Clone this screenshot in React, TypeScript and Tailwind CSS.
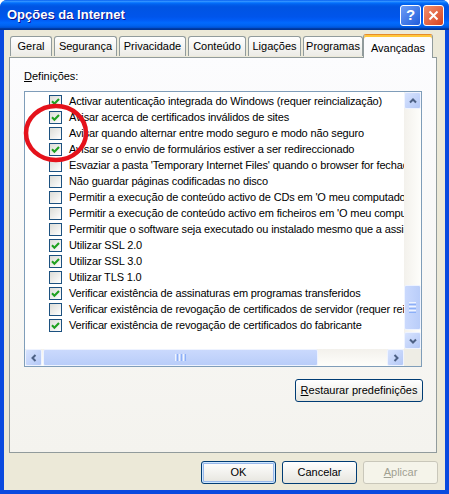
import React from "react";

const rows: [boolean, string][] = [
  [true, "Activar autenticação integrada do Windows (requer reincialização)"],
  [true, "Avisar acerca de certificados inválidos de sites"],
  [false, "Avisar quando alternar entre modo seguro e modo não seguro"],
  [true, "Avisar se o envio de formulários estiver a ser redireccionado"],
  [false, "Esvaziar a pasta 'Temporary Internet Files' quando o browser for fechado"],
  [false, "Não guardar páginas codificadas no disco"],
  [false, "Permitir a execução de conteúdo activo de CDs em 'O meu computador'"],
  [false, "Permitir a execução de conteúdo activo em ficheiros em 'O meu computador'"],
  [false, "Permitir que o software seja executado ou instalado mesmo que a assinatura seja inválida"],
  [true, "Utilizar SSL 2.0"],
  [true, "Utilizar SSL 3.0"],
  [false, "Utilizar TLS 1.0"],
  [true, "Verificar existência de assinaturas em programas transferidos"],
  [false, "Verificar existência de revogação de certificados de servidor (requer reinicialização)"],
  [true, "Verificar existência de revogação de certificados do fabricante"],
];

const tabs = [
  { label: "Geral", cls: "w-[42px]" },
  { label: "Segurança", cls: "w-[63px] ml-[2px]" },
  { label: "Privacidade", cls: "w-[67px] ml-[2px]" },
  { label: "Conteúdo", cls: "w-[58px] ml-[2px]" },
  { label: "Ligações", cls: "w-[53px] ml-[2px]" },
  { label: "Programas", cls: "w-[60px] ml-[2px]" },
];

const Check = ({ on }: { on: boolean }) => (
  <span className="w-[13px] h-[13px] shrink-0 border border-[#1C5180] bg-linear-to-br from-[#DCDCD7] to-white flex items-center justify-center">
    {on && (
      <svg width="11" height="11" viewBox="0 0 11 11">
        <path d="M2 5.3 L4.4 7.7 L9 3" stroke="#21A121" strokeWidth="2.1" fill="none" />
      </svg>
    )}
  </span>
);

const ScrollBtn = ({ d }: { d: string }) => (
  <span className="w-[17px] h-[17px] shrink-0 rounded-[2px] border border-[#EEF3FF] bg-linear-to-br from-[#D7E3FE] to-[#B4C8F6] flex items-center justify-center">
    <svg width="8" height="8" viewBox="0 0 8 8">
      <path d={d} stroke="#4D6185" strokeWidth="2" fill="none" />
    </svg>
  </span>
);

const XpButton = ({ children, cls }: { children: React.ReactNode; cls: string }) => (
  <button className={"h-[23px] rounded-[3px] border border-[#003C74] bg-linear-to-b from-white to-[#E6E5DE] text-[11px] text-black flex items-center justify-center " + cls}>
    {children}
  </button>
);

export default function App() {
  return (
    <div className="w-[449px] h-[494px] bg-white relative font-['Liberation_Sans',Arial,sans-serif] text-[11px] text-black">
      <div className="w-full h-full flex flex-col rounded-t-[7px] overflow-hidden bg-[#0A4ADF]">
        {/* title bar */}
        <div className="h-[30px] shrink-0 flex items-center pl-[7px] pr-[5px] bg-[linear-gradient(to_bottom,#0058ee_0%,#3593ff_4%,#288eff_6%,#127dff_8%,#036ffc_10%,#0262ee_14%,#0057e5_20%,#0054e3_24%,#0055eb_56%,#005bf5_66%,#026afe_76%,#0062ef_86%,#0052d6_92%,#0040ab_94%,#003092_100%)]">
          <span className="flex-1 text-white font-bold text-[13px] [text-shadow:1px_1px_#0F1089]">Opções da Internet</span>
          <span className="w-[21px] h-[21px] rounded-[3px] border border-white bg-linear-to-br from-[#6E9DF5] to-[#1F5BDB] text-white font-bold text-[15px] flex items-center justify-center">?</span>
          <span className="w-[21px] h-[21px] ml-[2px] rounded-[3px] border border-white bg-linear-to-br from-[#F08E6C] to-[#D6401C] flex items-center justify-center">
            <svg width="11" height="11" viewBox="0 0 11 11">
              <path d="M1.5 1.5 L9.5 9.5 M9.5 1.5 L1.5 9.5" stroke="white" strokeWidth="2" />
            </svg>
          </span>
        </div>

        {/* body */}
        <div className="flex-1 px-[4px] pb-[4px]">
          <div className="h-full bg-[#ECE9D8] flex flex-col pt-[4px] pl-[5px] pr-[8px]">
            {/* tabs */}
            <div className="h-[23px] flex items-end pl-[1px] relative z-10">
              {tabs.map((t) => (
                <div
                  key={t.label}
                  className={"h-[20px] mb-px border border-b-0 border-[#919B9C] rounded-t-[3px] bg-linear-to-b from-white to-[#ECEBE6] flex items-center justify-center " + t.cls}
                >
                  {t.label}
                </div>
              ))}
              <div className="w-[70px] h-[24px] -mb-px rounded-t-[3px] border-x border-t border-[#919B9C] border-t-[#E68B2C] shadow-[inset_0_2px_0_#FFC73C] bg-[#FCFCFE] flex items-start justify-center pt-[5px]">
                Avançadas
              </div>
            </div>

            {/* panel */}
            <div className="h-[396px] border border-[#919B9C] bg-linear-to-b from-[#FCFCFE] to-[#F4F3EE] flex flex-col pl-[14px] pr-[13px] pt-[12px]">
              <div className="h-[13px] leading-[13px]">
                <span className="underline">D</span>efinições:
              </div>
              <div className="mt-[8px] w-[398px] h-[276px] border border-[#7F9DB9] bg-white grid grid-cols-[379px_17px] grid-rows-[257px_17px]">
                <div className="overflow-hidden pt-[1px] tracking-[-0.15px]">
                  {rows.map(([on, text], i) => (
                    <div key={i} className="h-[16px] flex items-center pl-[24px] gap-[7px] whitespace-nowrap">
                      <Check on={on} />
                      <span>{text}</span>
                    </div>
                  ))}
                </div>
                {/* vertical scrollbar */}
                <div className="flex flex-col bg-linear-to-r from-[#F3F1EC] to-[#FEFEFB]">
                  <ScrollBtn d="M1 5.5 L4 2.5 L7 5.5" />
                  <div className="flex-1 flex flex-col">
                    <div className="mt-[176px] h-[45px] rounded-[2px] border border-[#EEF3FF] bg-linear-to-r from-[#CAD9FD] to-[#B9CDF9] flex flex-col items-center justify-center gap-[1px]">
                      <span className="w-[7px] h-px bg-[#EEF4FE]" />
                      <span className="w-[7px] h-px bg-[#8CB0F8]" />
                      <span className="w-[7px] h-px bg-[#EEF4FE]" />
                      <span className="w-[7px] h-px bg-[#8CB0F8]" />
                      <span className="w-[7px] h-px bg-[#EEF4FE]" />
                      <span className="w-[7px] h-px bg-[#8CB0F8]" />
                    </div>
                  </div>
                  <ScrollBtn d="M1 2.5 L4 5.5 L7 2.5" />
                </div>
                {/* horizontal scrollbar */}
                <div className="flex bg-linear-to-b from-[#F3F1EC] to-[#FEFEFB]">
                  <ScrollBtn d="M5.5 1 L2.5 4 L5.5 7" />
                  <div className="flex-1 flex">
                    <div className="ml-[1px] w-[275px] h-[17px] rounded-[2px] border border-[#EEF3FF] bg-linear-to-b from-[#CAD9FD] to-[#B9CDF9] flex items-center justify-center gap-[1px]">
                      <span className="w-px h-[7px] bg-[#EEF4FE]" />
                      <span className="w-px h-[7px] bg-[#8CB0F8]" />
                      <span className="w-px h-[7px] bg-[#EEF4FE]" />
                      <span className="w-px h-[7px] bg-[#8CB0F8]" />
                      <span className="w-px h-[7px] bg-[#EEF4FE]" />
                      <span className="w-px h-[7px] bg-[#8CB0F8]" />
                    </div>
                  </div>
                  <ScrollBtn d="M2.5 1 L5.5 4 L2.5 7" />
                </div>
                <div className="bg-[#EEEDE5]" />
              </div>
              <div className="mt-[12px] flex justify-end">
                <XpButton cls="w-[128px]">
                  <span>
                    <span className="underline">R</span>estaurar predefinições
                  </span>
                </XpButton>
              </div>
            </div>

            {/* dialog buttons */}
            <div className="mt-[8px] flex justify-end gap-[6px] -mr-[1px]">
              <XpButton cls="w-[75px] shadow-[inset_0_0_0_1px_#CEE7FF,inset_0_0_0_2px_#98B8EA]">OK</XpButton>
              <XpButton cls="w-[75px]">Cancelar</XpButton>
              <button className="w-[75px] h-[23px] rounded-[3px] border border-[#C9C7BA] bg-[#F5F4EA] text-[11px] text-[#A1A192] flex items-center justify-center">
                <span>
                  <span className="underline">A</span>plicar
                </span>
              </button>
            </div>
          </div>
        </div>
      </div>

      {/* red annotation circle */}
      <svg className="absolute left-[22px] top-[102px] pointer-events-none" width="68" height="62" viewBox="0 0 68 62">
        <ellipse cx="34" cy="31" rx="30" ry="27" stroke="#E5121B" strokeWidth="4.5" fill="none" />
      </svg>
    </div>
  );
}
